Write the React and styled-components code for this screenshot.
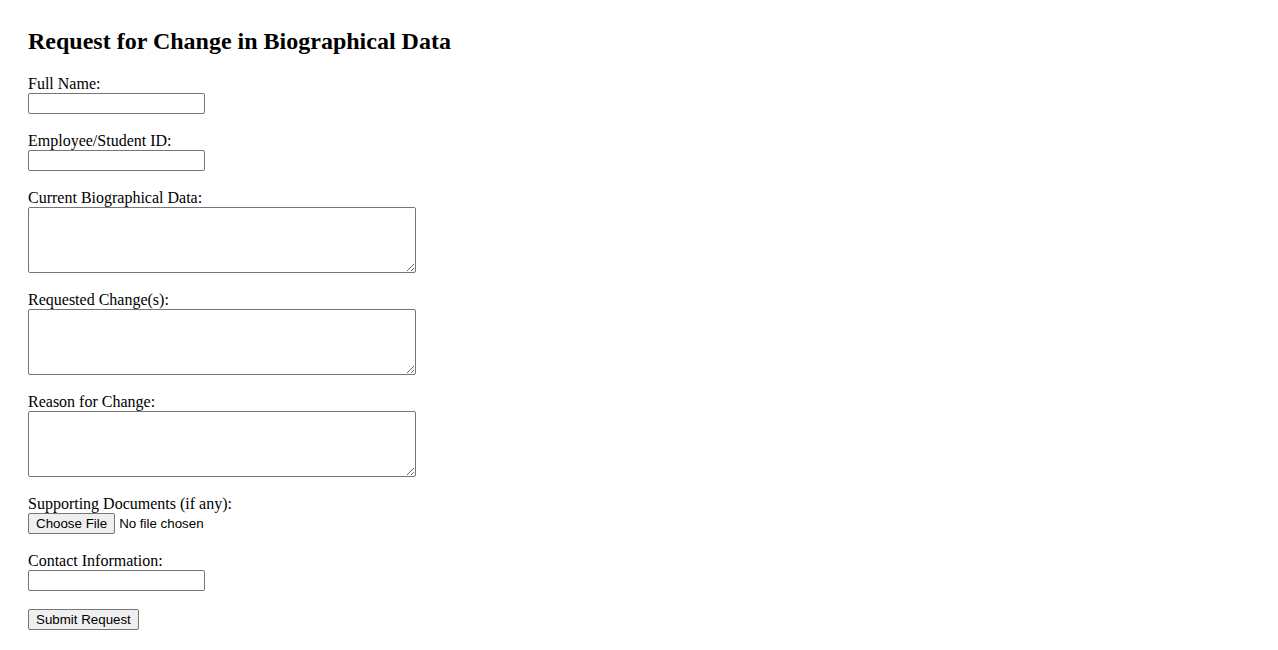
import React from 'react';
import styled, { createGlobalStyle } from 'styled-components';

const GlobalStyle = createGlobalStyle`
    body {
        margin: 0;
        background: #ffffff;
        color: #000000;
        font-family: "Liberation Serif", "Times New Roman", serif;
    }
`;

const Page = styled.div`
    padding: 27px 28px 20px;
`;

const Title = styled.h2`
    margin: 0 0 20px;
    font-size: 24px;
    line-height: 28px;
    font-weight: bold;
`;

const Form = styled.form`
    display: flex;
    flex-direction: column;
    align-items: flex-start;
    gap: 18px;
`;

const Field = styled.div`
    display: flex;
    flex-direction: column;
    align-items: flex-start;
`;

const Label = styled.label`
    font-size: 16px;
    line-height: 18px;
`;

const TextInput = styled.input`
    box-sizing: border-box;
    width: 177px;
    height: 21px;
    margin: 0;
    padding: 1px 2px;
    border: 1px solid #767676;
    border-radius: 2px;
    font-family: "Liberation Sans", Arial, sans-serif;
    font-size: 13.33px;
`;

const TextArea = styled.textarea`
    display: block;
    box-sizing: border-box;
    width: 388px;
    height: 66px;
    margin: 0;
    padding: 2px;
    border: 1px solid #767676;
    border-radius: 2px;
    font-family: "Liberation Mono", monospace;
    font-size: 13.33px;
`;

const FileInput = styled.input`
    height: 21px;
    margin: 0;
    font-family: "Liberation Sans", Arial, sans-serif;
    font-size: 13.33px;

    &::file-selector-button {
        box-sizing: border-box;
        height: 21px;
        margin: 0 4px 0 0;
        padding: 1px 7px;
        background: #efefef;
        border: 1px solid #767676;
        border-radius: 2px;
        font-family: "Liberation Sans", Arial, sans-serif;
        font-size: 13.33px;
        color: #000000;
    }
`;

const SubmitButton = styled.button`
    box-sizing: border-box;
    height: 21px;
    margin: 0;
    padding: 1px 7px;
    background: #efefef;
    border: 1px solid #767676;
    border-radius: 2px;
    font-family: "Liberation Sans", Arial, sans-serif;
    font-size: 13.33px;
    color: #000000;
`;

const fields = [
    { id: 'fullName', label: 'Full Name:', kind: 'text' },
    { id: 'employeeId', label: 'Employee/Student ID:', kind: 'text' },
    { id: 'currentData', label: 'Current Biographical Data:', kind: 'area' },
    { id: 'requestedChanges', label: 'Requested Change(s):', kind: 'area' },
    { id: 'reason', label: 'Reason for Change:', kind: 'area' },
    { id: 'documents', label: 'Supporting Documents (if any):', kind: 'file' },
    { id: 'contact', label: 'Contact Information:', kind: 'text' }
];

function Control({ id, kind }) {
    if (kind === 'area') return <TextArea id={id} name={id} />;
    if (kind === 'file') return <FileInput id={id} name={id} type="file" />;
    return <TextInput id={id} name={id} type="text" />;
}

export default function App() {
    return (
        <Page>
            <GlobalStyle />
            <Title>Request for Change in Biographical Data</Title>
            <Form onSubmit={(e) => e.preventDefault()}>
                {fields.map((f) => (
                    <Field key={f.id}>
                        <Label htmlFor={f.id}>{f.label}</Label>
                        <Control id={f.id} kind={f.kind} />
                    </Field>
                ))}
                <SubmitButton type="submit">Submit Request</SubmitButton>
            </Form>
        </Page>
    );
}
